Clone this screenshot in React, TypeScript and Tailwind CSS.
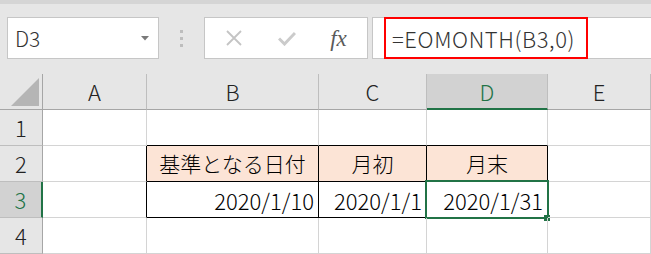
import React from 'react';

const font = { fontFamily: '"Noto Sans CJK JP", "Noto Sans", sans-serif' };

const cols = [
  { key: 'A', w: 'w-[104px]' },
  { key: 'B', w: 'w-[172px]' },
  { key: 'C', w: 'w-[108px]' },
  { key: 'D', w: 'w-[121px]' },
  { key: 'E', w: 'flex-1' },
];

type Cell = { text?: string; align?: 'left' | 'center' | 'right'; fill?: boolean; blackRight?: boolean; blackBottom?: boolean; selected?: boolean };

const rows: { n: number; cells: Cell[] }[] = [
  { n: 1, cells: [{}, { blackBottom: true }, { blackBottom: true }, { blackBottom: true }, {}] },
  {
    n: 2,
    cells: [
      { blackRight: true },
      { text: '基準となる日付', align: 'center', fill: true, blackRight: true, blackBottom: true },
      { text: '月初', align: 'center', fill: true, blackRight: true, blackBottom: true },
      { text: '月末', align: 'center', fill: true, blackRight: true, blackBottom: true },
      {},
    ],
  },
  {
    n: 3,
    cells: [
      { blackRight: true },
      { text: '2020/1/10', align: 'right', blackRight: true, blackBottom: true },
      { text: '2020/1/1', align: 'right', blackRight: true, blackBottom: true },
      { text: '2020/1/31', align: 'right', blackRight: true, blackBottom: true, selected: true },
      {},
    ],
  },
  { n: 4, cells: [{}, {}, {}, {}, {}] },
];

const FormulaBar = () => (
  <div className="h-[74px] bg-[#e6e6e6] flex flex-col">
    <div className="h-[4px] bg-[#d5d5d5]" />
    <div className="flex items-start pt-[13px]">
      {/* name box */}
      <div className="ml-[7px] w-[152px] h-[42px] bg-white border border-[#c6c6c6] flex items-center pl-[7px] pr-[9px]">
        <span className="text-[21px] font-light text-[#333] flex-1 leading-none" style={font}>D3</span>
        <svg width="8" height="5" viewBox="0 0 8 5"><path d="M0 0 L8 0 L4 4.5 Z" fill="#7a7a7a" /></svg>
      </div>
      {/* grip dots */}
      <div className="w-[45px] h-[42px] flex flex-col items-center justify-center gap-[4px]">
        <div className="w-[3px] h-[3px] bg-[#bdbdbd]" />
        <div className="w-[3px] h-[3px] bg-[#bdbdbd]" />
        <div className="w-[3px] h-[3px] bg-[#bdbdbd]" />
      </div>
      {/* cancel / enter / fx */}
      <div className="w-[164px] h-[42px] bg-white border border-[#c6c6c6] flex items-center">
        <div className="w-[56px] flex justify-center pl-[2px]">
          <svg width="16" height="16" viewBox="0 0 16 16">
            <path d="M1 1 L15 15 M15 1 L1 15" stroke="#c4c4c4" strokeWidth="1.8" />
          </svg>
        </div>
        <div className="w-[52px] flex justify-center">
          <svg width="18" height="15" viewBox="0 0 18 15">
            <path d="M1 7.5 L6.5 13 L17 2" stroke="#cbcbcb" strokeWidth="3" fill="none" />
          </svg>
        </div>
        <div className="flex-1 flex justify-center pr-[3px]">
          <span className="text-[23px] italic text-[#5a5a5a] leading-none" style={{ fontFamily: '"Liberation Serif", serif' }}>
            fx
          </span>
        </div>
      </div>
      {/* formula input */}
      <div className="ml-[4px] flex-1 h-[42px] bg-white border-y border-l border-[#c6c6c6] pl-[11px]">
        <div className="w-[204px] h-[42px] -mt-px border-2 border-[#ff0000] flex items-center pl-[6px]">
          <span className="text-[22px] font-light tracking-[0.6px] text-[#333] leading-none" style={font}>=EOMONTH(B3,0)</span>
        </div>
      </div>
    </div>
  </div>
);

export default function App() {
  return (
    <div className="w-[651px] h-[254px] overflow-hidden bg-white font-light" style={font}>
      <FormulaBar />
      {/* column headers */}
      <div className="flex h-[36px] bg-[#e6e6e6]">
        <div className="w-[43px] border-r border-b border-[#a6a6a6] flex items-end justify-end pr-[3px] pb-[3px]">
          <svg width="28" height="28" viewBox="0 0 28 28"><path d="M28 0 L28 28 L0 28 Z" fill="#b5b5b5" /></svg>
        </div>
        {cols.map((c) => (
          <div
            key={c.key}
            className={`${c.w} flex items-center justify-center text-[22px] ${
              c.key === 'D'
                ? 'bg-[#d2d2d2] text-[#217346] border-b-2 border-b-[#217346] border-r border-r-[#bebebe]'
                : 'text-[#222] border-b border-b-[#a6a6a6] border-r border-r-[#bebebe]'
            }`}
          >
            {c.key}
          </div>
        ))}
      </div>
      {rows.map((r) => (
        <div key={r.n} className="flex h-[36px]">
          <div
            className={`w-[43px] flex items-center justify-center text-[22px] border-b border-b-[#bebebe] ${
              r.n === 3
                ? 'bg-[#d2d2d2] text-[#217346] border-r-2 border-r-[#217346]'
                : 'bg-[#e6e6e6] text-[#222] border-r border-r-[#a6a6a6]'
            }`}
          >
            {r.n}
          </div>
          {r.cells.map((cell, i) => (
            <div
              key={i}
              className={`${cols[i].w} relative flex items-center text-black border-r border-b ${
                cell.blackRight ? 'border-r-black' : 'border-r-[#d4d4d4]'
              } ${cell.blackBottom ? 'border-b-black' : 'border-b-[#d4d4d4]'} ${cell.fill ? 'bg-[#fce4d6]' : ''} ${
                cell.align === 'center' ? 'justify-center text-[21px]' : cell.align === 'right' ? 'justify-end pr-[4px] text-[22px]' : ''
              }`}
            >
              {cell.text && <span className="leading-none">{cell.text}</span>}
              {cell.selected && (
                <>
                  <div className="absolute -left-[2px] -top-[2px] -right-[2px] -bottom-[2px] border-2 border-[#217346]" />
                  <div className="absolute -right-[3px] -bottom-[4px] w-[6px] h-[6px] bg-[#217346]" />
                </>
              )}
            </div>
          ))}
        </div>
      ))}
    </div>
  );
}
